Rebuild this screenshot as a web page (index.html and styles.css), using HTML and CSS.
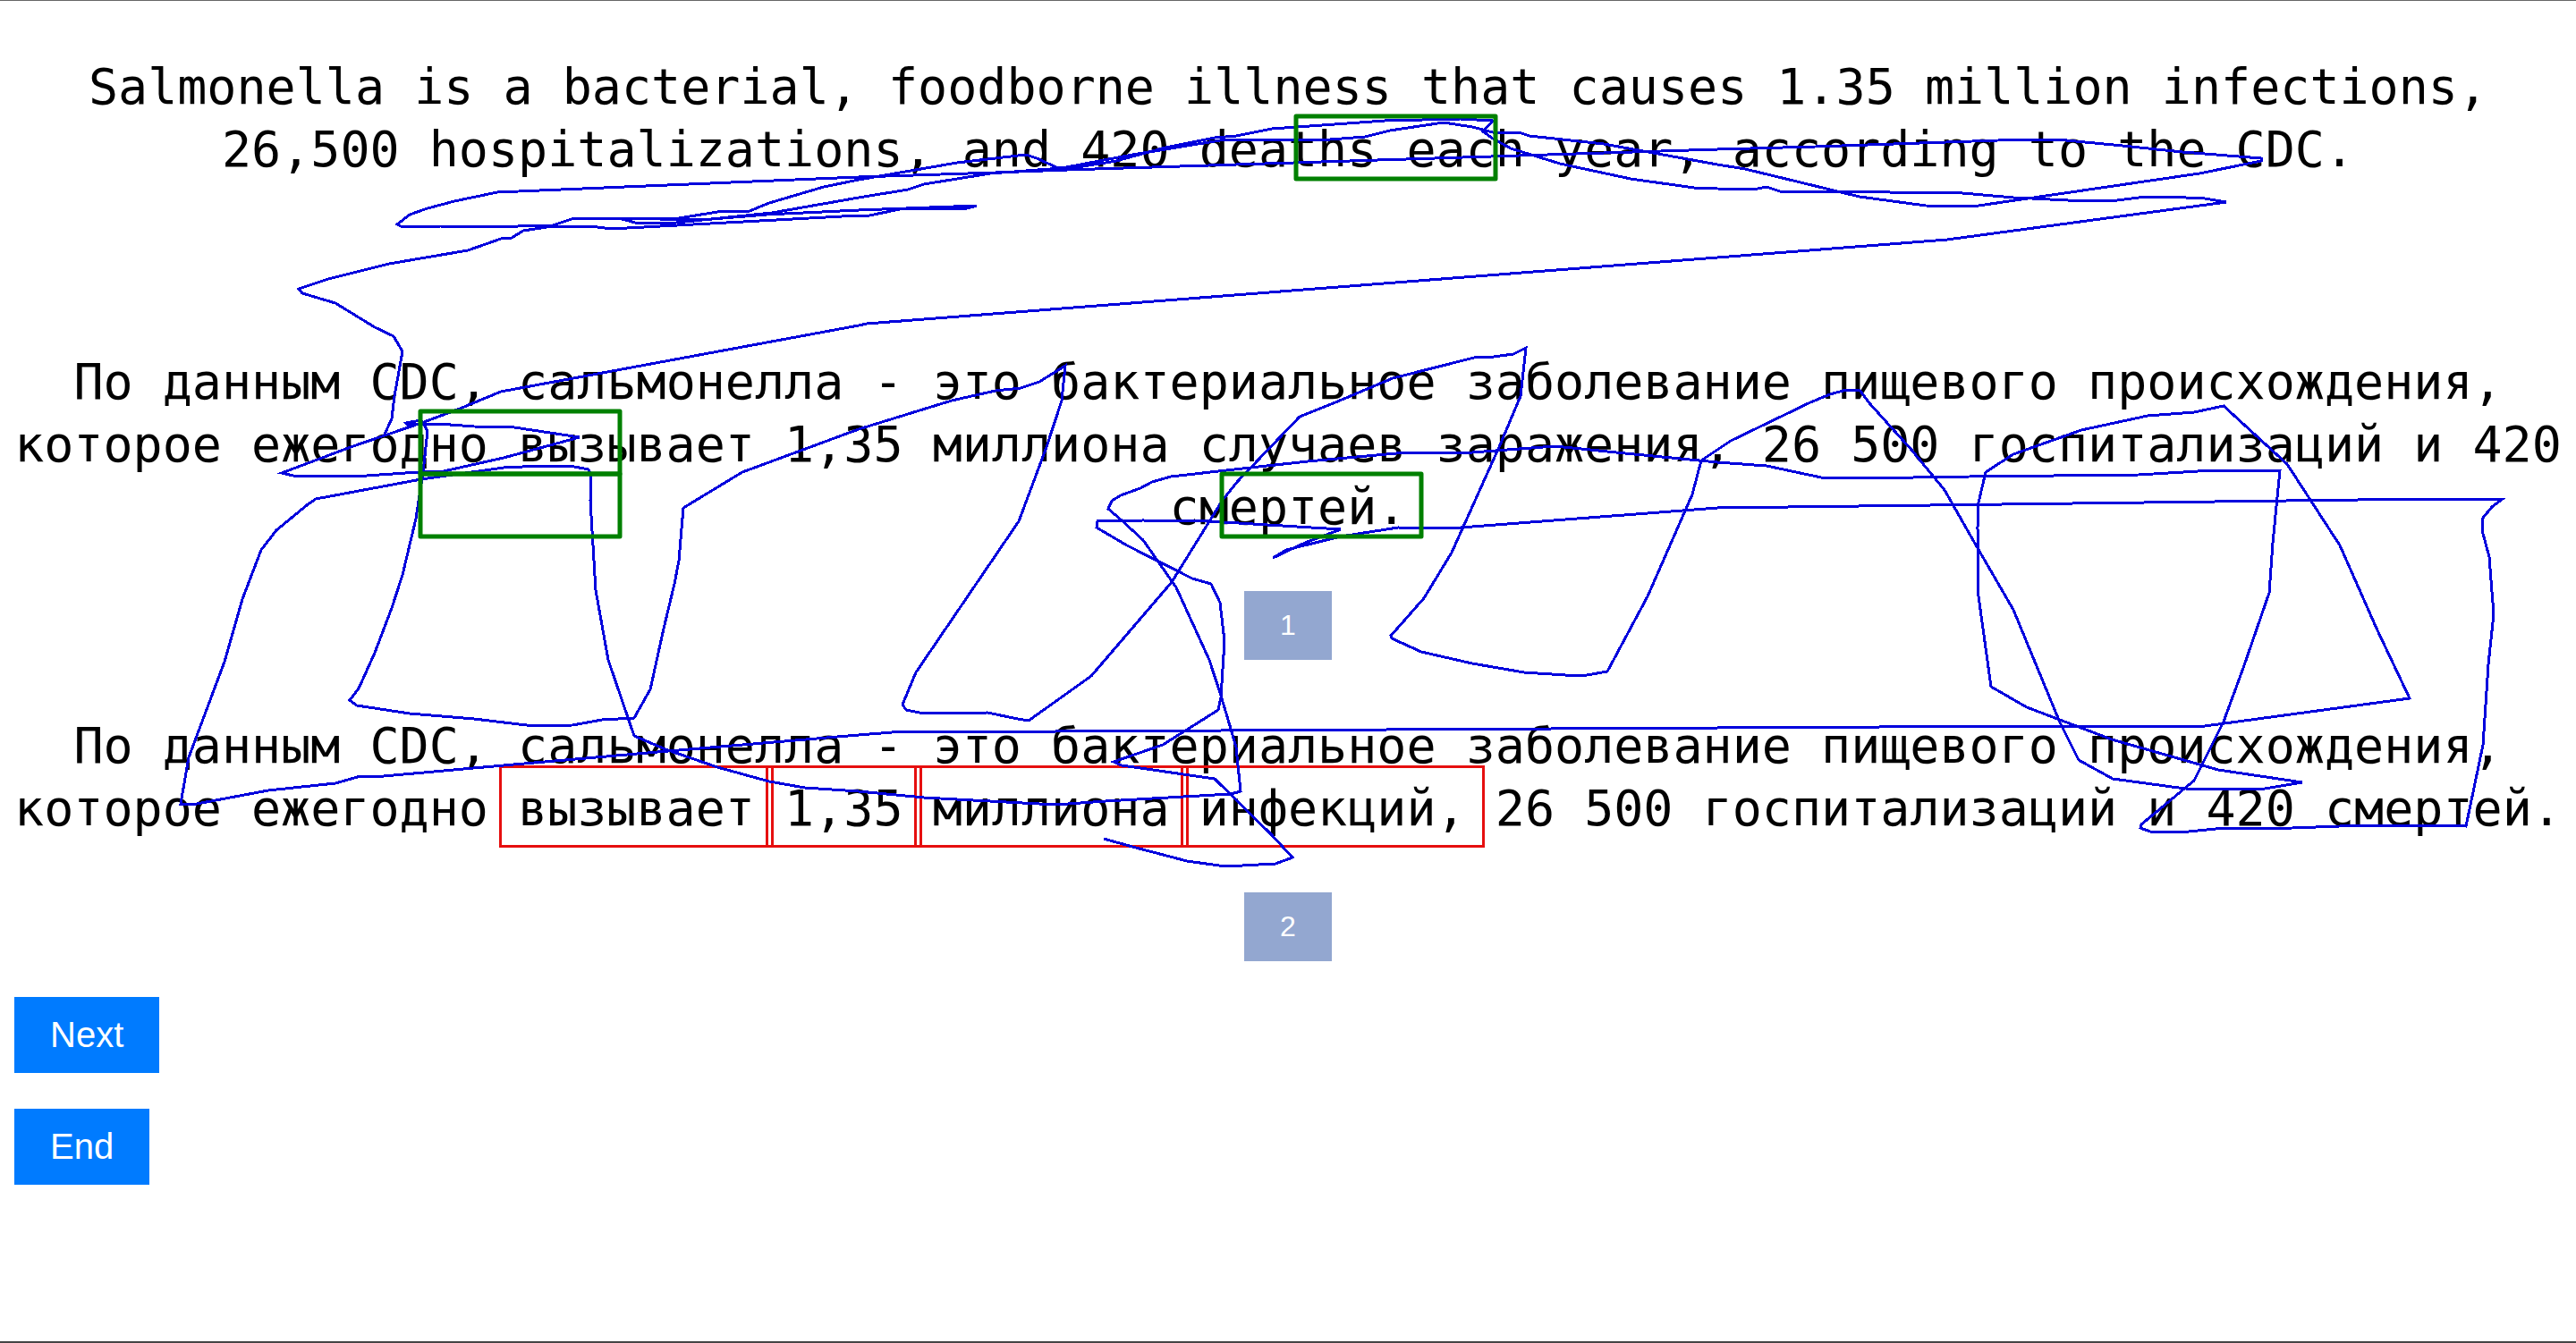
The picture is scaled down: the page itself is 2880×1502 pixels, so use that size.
FILE: index.html
```html
<!DOCTYPE html>
<html lang="en">
<head>
<meta charset="utf-8">
<title>Translation comparison</title>
<link rel="stylesheet" href="styles.css">
</head>
<body>
<main class="page">
  <p class="source">Salmonella is a bacterial, foodborne illness that causes 1.35 million infections, 26,500 hospitalizations, and 420 deaths each year, according to the CDC.</p>

  <section class="candidate" lang="ru">
    <p class="sentence">По данным CDC, сальмонелла - это бактериальное заболевание пищевого происхождения, которое ежегодно вызывает 1,35 миллиона случаев заражения, 26 500 госпитализаций и 420 смертей.</p>
    <button class="choice" type="button">1</button>
  </section>

  <section class="candidate" lang="ru">
    <p class="sentence">По данным CDC, сальмонелла - это бактериальное заболевание пищевого происхождения, которое ежегодно <span class="mark">вызывает</span> <span class="mark">1,35</span> <span class="mark">миллиона</span> <span class="mark">инфекций,</span> 26 500 госпитализаций и 420 смертей.</p>
    <button class="choice" type="button">2</button>
  </section>

  <nav class="actions">
    <button class="action" type="button">Next</button>
    <button class="action" type="button">End</button>
  </nav>

  <svg class="gaze" viewBox="0 0 2880 1502" preserveAspectRatio="none" aria-hidden="true">
    <!-- gaze trail over both candidates -->
    <polyline class="trail" points="960,198 556,215 508,225 478,233 458,240 444,251 450,254 493,253 579,253 618,252 642,244 759,244 802,237 838,236 860,227 921,209 960,201 1070,182 1147,173 1159,177 1183,188 1211,186 1248,180 1303,165 1358,154 1382,152 1422,144 1548,135 1633,133 1669,135 1658,147 1669,155 1689,166 1744,183 1823,200 1894,210 1920,211 1960,212 1975,209 1990,214 2110,214 2113,215 2183,215 2251,221 2312,224 2367,224 2391,221 2422,220 2465,222 2489,226 2177,268 1920,288 969,362 960,364 560,438 514,457 474,472 392,500 315,529 328,532 410,532 468,528 496,527 563,512 648,489 575,478 530,477 490,474 456,475 454,473 471,470 478,482 473,528 465,580 450,643 438,680 419,730 401,770 391,783 399,789 458,798 530,804 597,812 640,811 673,805 709,803 727,771 742,703 754,653 759,627 764,568 830,528 960,480 1064,448 1113,437 1141,434 1162,427 1191,409 1187,448 1170,500 1139,583 1024,752 1009,788 1013,794 1033,798 1104,797 1138,804 1150,806 1220,756 1310,651 1367,559 1384,538 1453,466 1493,450 1557,423 1652,399 1670,399 1692,396 1706,389 1700,443 1676,500 1623,618 1592,669 1555,711 1556,714 1589,729 1646,742 1704,752 1750,755 1774,755 1797,751 1842,667 1892,553 1902,515 1920,503 1935,493 2024,450 2046,441 2064,436 2079,436 2091,452 2137,503 2174,548 2211,613 2251,682 2303,808 2324,850 2362,871 2443,882 2502,883 2532,882 2574,875 2480,861 2361,827 2266,791 2226,768 2212,667 2211,590 2212,562 2220,528 2251,508 2327,481 2401,465 2453,461 2486,454 2557,519 2616,610 2658,705 2694,781 2465,812 2287,812 2101,813 1920,814 997,819 960,822 747,840 563,856 429,868 403,868 375,876 300,884 220,899 202,899 211,847 251,740 271,670 292,615 309,593 343,565 353,558 471,536 563,523 606,521 637,521 658,525 661,532 660,560 666,660 680,738 709,823 744,838 802,858 860,874 900,881 960,885 1033,892 1180,900 1236,896 1376,888 1387,885 1382,836 1376,815 1365,778 1352,738 1315,657 1278,604 1254,582 1239,569 1243,560 1253,554 1275,546 1288,539 1309,533 1389,524 1462,516 1572,506 1646,506 1738,499 1817,507 1920,517 1975,521 2036,534 2076,535 2202,533 2391,531 2474,526 2549,526 2541,607 2537,663 2508,747 2486,807 2453,873 2394,922 2393,926 2404,930 2447,930 2477,927 2563,926 2642,923 2743,923 2757,924 2776,833 2782,743 2788,687 2783,623 2775,593 2776,579 2786,567 2798,558 2716,558 1920,568 1633,590 1618,591 1563,590 1499,600 1438,615 1423,624 1459,607 1499,592 1352,583 1278,582 1227,583 1226,590 1260,610 1333,647 1354,653 1364,674 1369,717 1365,780 1362,794 1300,833 1245,852 1254,856 1358,871 1422,934 1445,959 1426,966 1370,969 1327,963 1266,947 1234,938"/>
    <!-- gaze trail over the source sentence -->
    <polyline class="trail" points="960,198 1113,193 1193,190 1920,167 2030,164 2263,156 2300,156 2373,163 2440,170 2528,177 2528,180 2459,194 2205,231 2153,230 2079,220 1951,189 1920,184 1793,161 1710,152 1701,149 1669,148 1646,142 1614,137 1554,146 1526,153 1487,156 1370,156 1266,173 1187,188 1107,194 1033,206 1015,212 960,221 863,238 756,249 710,249 692,244 784,246 857,240 960,235 1092,230 1082,233 1006,234 972,241 960,241 683,256 661,253 618,253 585,258 572,266 563,266 523,280 435,295 367,312 334,323 338,328 375,339 419,366 440,376 450,393 441,443 438,468 430,486"/>
    <!-- fixation areas -->
    <rect class="area" x="1449" y="130" width="223" height="70"/>
    <rect class="area" x="470" y="460" width="223" height="70"/>
    <rect class="area" x="470" y="530" width="223" height="70"/>
    <rect class="area" x="1366" y="530" width="223" height="70"/>
  </svg>
</main>
</body>
</html>
```
FILE: styles.css
```css
* {
  box-sizing: border-box;
}

body {
  margin: 0;
  background: #fff;
  color: #000;
}

.page {
  position: relative;
  min-height: 100vh;
  padding: 61px 8px 0;
  border-top: 1px solid #666;
  border-bottom: 2px solid #444;
}

.source,
.sentence {
  margin: 0;
  font: 55px/70px "DejaVu Sans Mono", monospace;
  text-align: center;
}

.source {
  margin-bottom: 190px;
}

.candidate {
  display: flex;
  flex-direction: column;
  align-items: center;
  gap: 59px;
  margin-bottom: 61px;
}

.candidate + .candidate {
  margin-bottom: 40px;
}

.mark {
  position: relative;
}

/* frame reaches past the word without moving its neighbours */
.mark::after {
  content: "";
  position: absolute;
  inset: -16px -21px -12px;
  border: 3px solid #e60f0f;
}

.choice,
.action {
  padding: 20px 40px;
  border: 0;
  color: #fff;
  font-family: "Liberation Sans", Arial, sans-serif;
}

.choice {
  background: #93a7d0;
  font-size: 32px;
  line-height: 37px;
}

.action {
  background: #007bff;
  font-size: 40px;
  line-height: 45px;
}

.actions {
  display: flex;
  flex-direction: column;
  align-items: flex-start;
  gap: 40px;
  padding-left: 8px;
}

.gaze {
  position: absolute;
  inset: -1px 0 -2px;
  width: 100%;
  height: calc(100% + 3px);
  pointer-events: none;
}

.trail {
  fill: none;
  stroke: #0000dd;
  stroke-width: 3;
  shape-rendering: crispEdges;
}

.area {
  fill: none;
  stroke: #008000;
  stroke-width: 5;
  stroke-linejoin: round;
}
```
